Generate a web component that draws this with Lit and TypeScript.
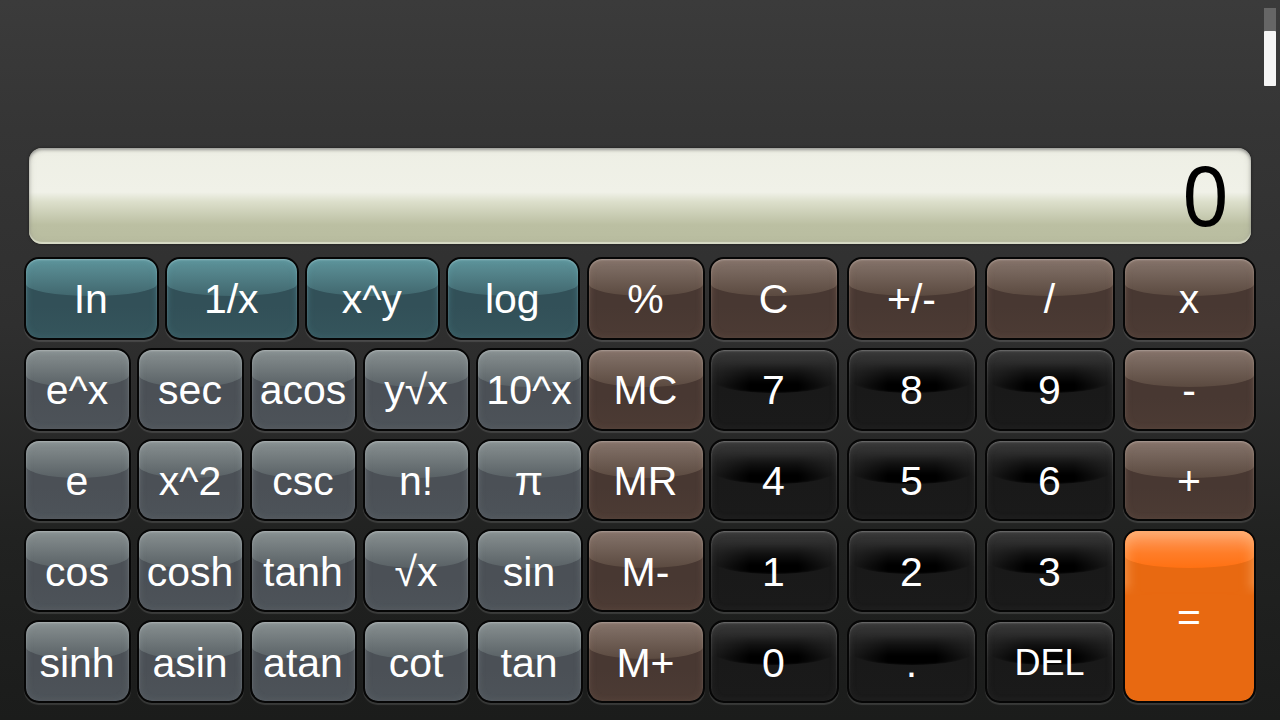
import { LitElement, html, css } from "lit";
import { customElement, property, state } from "lit/decorators.js";
import { classMap } from "lit/directives/class-map.js";

type Tone = "teal" | "slate" | "brown" | "black" | "orange";

@customElement("calc-key")
class CalcKey extends LitElement {
  @property() label = "";
  @property() tone: Tone = "slate";

  static styles = css`
    :host {
      display: grid;
      min-width: 0;
    }
    .key {
      position: relative;
      isolation: isolate;
      overflow: hidden;
      min-width: 0;
      margin: 0;
      padding: 2px 1px 0 0;
      border: 2px solid #060606;
      border-radius: 15px;
      background: linear-gradient(var(--base) 60%, var(--foot));
      background-clip: padding-box;
      background-color: #060606;
      box-shadow: 0 2px 1px rgba(255, 255, 255, 0.13);
      color: #fff;
      font: 41px/48px "Liberation Sans", Arial, sans-serif;
      text-align: center;
      white-space: nowrap;
      cursor: pointer;
    }
    .key::before {
      content: "";
      position: absolute;
      z-index: -1;
      inset: 0 0 auto;
      height: 37px;
      border-radius: 0 0 50% 50% / 0 0 12px 12px;
      background: linear-gradient(var(--shine), var(--mid));
      filter: blur(0.5px);
    }
    .key::after {
      content: "";
      position: absolute;
      z-index: -1;
      inset: 0;
      border-radius: 13px;
      box-shadow:
        inset 0 1px 2px rgba(255, 255, 255, 0.28),
        inset 0 0 7px var(--edge);
      -webkit-mask-image: linear-gradient(#000 40%, rgba(0, 0, 0, 0.4));
      mask-image: linear-gradient(#000 40%, rgba(0, 0, 0, 0.4));
    }
    .key:active {
      filter: brightness(0.85);
    }
    .teal {
      --shine: #5e949b;
      --mid: #41676e;
      --base: #325058;
      --foot: #35555c;
      --edge: rgba(100, 175, 185, 0.4);
    }
    .slate {
      --shine: #889091;
      --mid: #596165;
      --base: #4b5056;
      --foot: #4d5359;
      --edge: rgba(160, 172, 175, 0.35);
    }
    .brown {
      --shine: #85746b;
      --mid: #5b4a40;
      --base: #483832;
      --foot: #4c3b34;
      --edge: rgba(165, 135, 118, 0.35);
    }
    .black {
      --edge: rgba(90, 90, 90, 0.3);
      background-image: linear-gradient(#3a3a3a, #222 28%, #191919 45%, #1a1a1a);
    }
    .black::before {
      inset: 0 3px auto;
      height: 43px;
      background: linear-gradient(transparent 30%, #000 80%);
      -webkit-mask-image: linear-gradient(90deg, transparent, #000 30%, #000 70%, transparent);
      mask-image: linear-gradient(90deg, transparent, #000 30%, #000 70%, transparent);
      filter: blur(1px);
    }
    .orange {
      --base: #e86911;
      --foot: #e86911;
      --edge: rgba(255, 190, 130, 0.7);
    }
    .orange::before {
      background: linear-gradient(#ffa066, #ff7d28 60%, #ff7113);
    }
    .orange::after {
      inset: 0 0 auto;
      height: 74px;
      box-shadow: inset 0 2px 14px var(--edge);
      -webkit-mask-image: linear-gradient(#000 70%, transparent 88%);
      mask-image: linear-gradient(#000 70%, transparent 88%);
    }
    .word {
      font-size: 36px;
    }
  `;

  render() {
    const word = this.label === "DEL";
    return html`<button type="button" class=${classMap({ key: true, [this.tone]: true, word })}>${this.label}</button>`;
  }
}

const POWERS = ["In", "1/x", "x^y", "log"];
const FUNCTIONS = [
  ["e^x", "sec", "acos", "y√x", "10^x"],
  ["e", "x^2", "csc", "n!", "π"],
  ["cos", "cosh", "tanh", "√x", "sin"],
  ["sinh", "asin", "atan", "cot", "tan"],
];
const MEMORY = ["%", "MC", "MR", "M-", "M+"];
const PAD = ["C", "+/-", "/", "x", "7", "8", "9", "-", "4", "5", "6", "+", "1", "2", "3", "=", "0", ".", "DEL"];

@customElement("app-root")
class AppRoot extends LitElement {
  @state() value = "0";

  static styles = css`
    :host {
      display: flex;
      flex-direction: column;
      box-sizing: border-box;
      min-height: 100vh;
      padding-bottom: 17px;
      background: linear-gradient(#3b3b3b, #353535 18%, #2f2f2f 45%, #212221 75%, #1b1c1b);
      font-family: "Liberation Sans", Arial, sans-serif;
    }
    .top {
      display: flex;
      justify-content: flex-end;
      box-sizing: border-box;
      height: 148px;
      padding: 8px 4px;
    }
    .track {
      box-sizing: border-box;
      width: 12px;
      height: 78px;
      padding-top: 23px;
      background: #666;
    }
    .thumb {
      height: 55px;
      border-radius: 1px;
      background: #f5f5f5;
    }
    .display {
      display: flex;
      align-items: center;
      justify-content: flex-end;
      box-sizing: border-box;
      height: 96px;
      margin: 0 29px 13px;
      padding: 0 22px 4px;
      border-radius: 13px;
      background: linear-gradient(#eeefe5, #f0f1e8 46%, #dcdfcb 56%, #bbbfa2 80%, #b9bda0);
      box-shadow:
        inset 0 2px 3px rgba(110, 110, 110, 0.55),
        inset 0 -2px 1px rgba(235, 238, 220, 0.7),
        inset 0 0 6px rgba(150, 150, 140, 0.5),
        0 0 3px rgba(0, 0, 0, 0.5);
      color: #000;
      font: 82px/92px "Noto Sans", "Open Sans", sans-serif;
    }
    .keys {
      flex: 1;
      display: grid;
      grid-template-columns: 559fr 118fr 547fr;
      gap: 4px;
      padding: 0 24px;
    }
    .functions,
    .memory,
    .pad {
      display: grid;
      grid-auto-rows: minmax(60px, 1fr);
      row-gap: 8px;
      min-width: 0;
    }
    .row {
      display: grid;
      grid-auto-flow: column;
      grid-auto-columns: minmax(0, 1fr);
      column-gap: 6px;
    }
    .powers {
      padding-right: 3px;
    }
    .pad {
      grid-template-columns: repeat(3, minmax(0, 130fr)) minmax(0, 133fr);
      column-gap: 8px;
    }
    .equals {
      grid-row: span 2;
    }
  `;

  private press(label: string) {
    if (label === "C") this.value = "0";
    else if (label === "DEL") this.value = this.value.slice(0, -1) || "0";
    else if (label === "." && !this.value.includes(".")) this.value += ".";
    else if (/^\d$/.test(label)) this.value = this.value === "0" ? label : this.value + label;
  }

  private key(label: string, tone: Tone) {
    return html`<calc-key
      class=${classMap({ equals: label === "=" })}
      .label=${label}
      .tone=${tone}
      @click=${() => this.press(label)}
    ></calc-key>`;
  }

  private padTone(label: string): Tone {
    if (label === "=") return "orange";
    return /^(\d|\.|DEL)$/.test(label) ? "black" : "brown";
  }

  render() {
    return html`
      <header class="top">
        <div class="track"><div class="thumb"></div></div>
      </header>
      <output class="display">${this.value}</output>
      <main class="keys">
        <section class="functions">
          <div class="row powers">${POWERS.map((k) => this.key(k, "teal"))}</div>
          ${FUNCTIONS.map((r) => html`<div class="row">${r.map((k) => this.key(k, "slate"))}</div>`)}
        </section>
        <section class="memory">${MEMORY.map((k) => this.key(k, "brown"))}</section>
        <section class="pad">${PAD.map((k) => this.key(k, this.padTone(k)))}</section>
      </main>
    `;
  }
}
